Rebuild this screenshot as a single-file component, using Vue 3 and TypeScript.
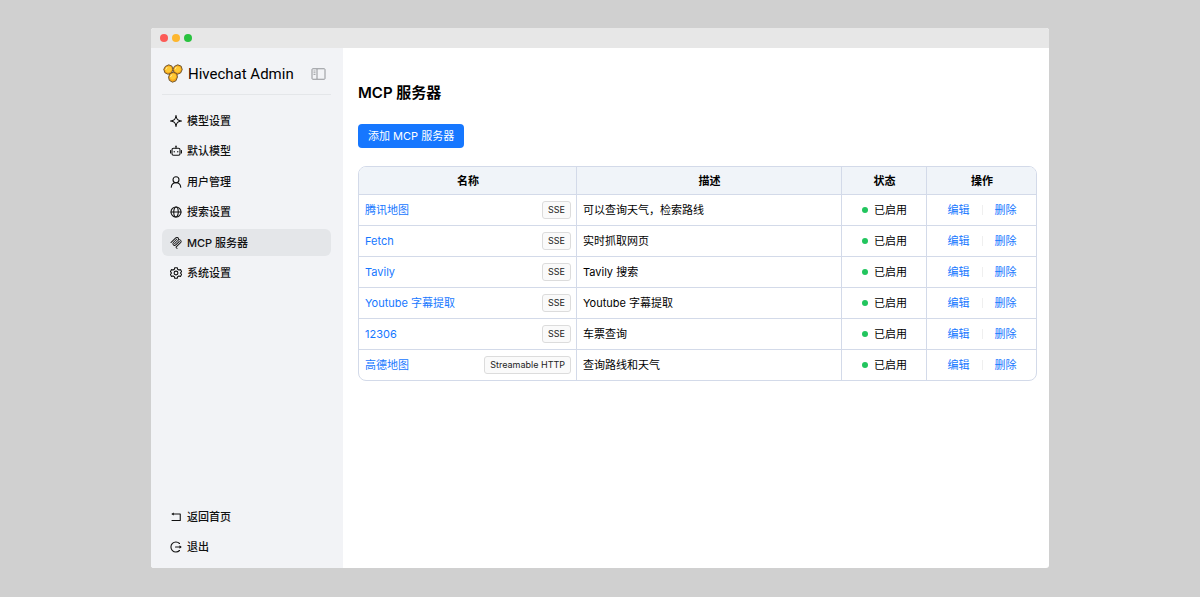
<script setup lang="ts">
interface NavItem {
  label: string
  icon: 'spark' | 'robot' | 'user' | 'globe' | 'mcp' | 'gear'
  active?: boolean
}

interface Server {
  name: string
  transport: string
  description: string
}

const navItems: NavItem[] = [
  { label: '模型设置', icon: 'spark' },
  { label: '默认模型', icon: 'robot' },
  { label: '用户管理', icon: 'user' },
  { label: '搜索设置', icon: 'globe' },
  { label: 'MCP 服务器', icon: 'mcp', active: true },
  { label: '系统设置', icon: 'gear' },
]

const servers: Server[] = [
  { name: '腾讯地图', transport: 'SSE', description: '可以查询天气，检索路线' },
  { name: 'Fetch', transport: 'SSE', description: '实时抓取网页' },
  { name: 'Tavily', transport: 'SSE', description: 'Tavily 搜索' },
  { name: 'Youtube 字幕提取', transport: 'SSE', description: 'Youtube 字幕提取' },
  { name: '12306', transport: 'SSE', description: '车票查询' },
  { name: '高德地图', transport: 'Streamable HTTP', description: '查询路线和天气' },
]
</script>

<template>
  <div class="desktop">
    <div class="window">
      <div class="titlebar">
        <span class="light red"></span>
        <span class="light yellow"></span>
        <span class="light green"></span>
      </div>
      <div class="body">
        <aside class="sidebar">
          <div class="brand">
            <svg class="logo" viewBox="0 0 38 36" aria-hidden="true">
              <g stroke="#6b512b" stroke-width="1.8" stroke-linejoin="round">
                <path fill="#f6a81c" d="M4.500 4.500L11 1.500l6 2.500 2 6.500-3 6.500-6.500 2.500-6-3L1.500 10z" />
                <path fill="#f6a81c" d="M21.500 4.500L28 1.500l6.500 2.500 2 6.500-3 6.500-6.500 2.500-6-3-2-6.500z" />
                <path fill="#f6a81c" d="M13 18.500l6.500-3 6.500 2.500 1.500 6.500-3 7.500-6.500 2.500-6-3.500-1.500-6z" />
              </g>
              <g fill="#ffc933">
                <path d="M6 6.500L11 4l4.500 2 1 4.500-2.500 4-4.500 1.500-4-2-1-4z" />
                <path d="M23 6.500L28 4l4.500 2 1.500 4.500-2.500 4-4.500 1.500-4-2-1-4z" />
                <path d="M14.500 20.500l5-2.500 4.500 2 1 4.500-2.500 4-4.500 1.500-4-2-.5-4z" />
              </g>
              <g fill="none" stroke="#fff0a8" stroke-width="1.800" stroke-linecap="round">
                <path d="M5.500 10l2-3.500M23 9.500l2-3.500M14.500 24l2-3.500" />
              </g>
            </svg>
            <span class="brand-name">Hivechat Admin</span>
            <button class="collapse" type="button" aria-label="收起侧栏">
              <svg viewBox="0 0 28 24" fill="none" stroke="#929498" stroke-width="2">
                <rect x="1" y="1.500" width="26" height="21" rx="1.500" />
                <path d="M11 2v20" />
                <path d="M4 6h4M4 9.500h4M4 13h4" stroke-width="1.600" />
              </svg>
            </button>
          </div>
          <nav class="nav">
            <a
              v-for="item in navItems"
              :key="item.label"
              href="#"
              class="nav-item"
              :class="{ active: item.active }"
            >
              <svg v-if="item.icon === 'spark'" class="icon" viewBox="0 0 24 24">
                <path class="line" d="M12 1c.7 5 1.500 7 3.200 8.300 1.500 1.200 3.300 2.200 7.800 2.700-4.500.5-6.300 1.500-7.800 2.700C13.500 16 12.700 18 12 23c-.7-5-1.500-7-3.200-8.300C7.300 13.500 5.500 12.500 1 12c4.500-.5 6.300-1.500 7.800-2.700C10.500 8 11.300 6 12 1z" />
              </svg>
              <svg v-else-if="item.icon === 'robot'" class="icon" viewBox="0 0 24 24">
                <rect class="line" x="4" y="6.500" width="16" height="14" rx="3" />
                <path class="line" d="M12 6.500V3M1 11v5M23 11v5" />
                <circle cx="12" cy="2.500" r="1.500" />
                <circle cx="8.500" cy="13.500" r="1.400" />
                <circle cx="15.500" cy="13.500" r="1.400" />
              </svg>
              <svg v-else-if="item.icon === 'user'" class="icon" viewBox="0 0 24 24">
                <circle class="line" cx="12" cy="7.500" r="6" />
                <path class="line" d="M2.500 22.500c.5-5.500 4-9 9.500-9s9 3.500 9.500 9" />
              </svg>
              <svg v-else-if="item.icon === 'globe'" class="icon" viewBox="0 0 24 24">
                <circle class="line" cx="12" cy="12" r="10" />
                <ellipse class="line" cx="12" cy="12" rx="4.500" ry="10" />
                <path class="line" d="M2 12h20" />
              </svg>
              <svg v-else-if="item.icon === 'mcp'" class="icon" viewBox="0 0 24 24">
                <path d="M15.688 2.343a2.588 2.588 0 00-3.610 0l-9.626 9.440a.863.863 0 01-1.203 0 .823.823 0 010-1.180l9.626-9.440a4.313 4.313 0 016.016 0 4.116 4.116 0 011.204 3.540 4.300 4.300 0 013.609 1.180l.05.05a4.115 4.115 0 010 5.900l-8.706 8.537a.274.274 0 000 .393l1.788 1.754a.823.823 0 010 1.180.863.863 0 01-1.203 0l-1.788-1.753a1.920 1.920 0 010-2.754l8.706-8.538a2.470 2.470 0 000-3.540l-.05-.049a2.588 2.588 0 00-3.607-.003l-7.172 7.034-.002.002-.098.097a.863.863 0 01-1.204 0 .823.823 0 010-1.180l7.273-7.133a2.470 2.470 0 00-.003-3.537z" />
                <path d="M14.485 4.703a.823.823 0 000-1.180.863.863 0 00-1.204 0l-7.119 6.982a4.115 4.115 0 000 5.900 4.314 4.314 0 006.016 0l7.120-6.982a.823.823 0 000-1.180.863.863 0 00-1.204 0l-7.119 6.982a2.588 2.588 0 01-3.610 0 2.470 2.470 0 010-3.540l7.120-6.982z" />
              </svg>
              <svg v-else class="icon" viewBox="0 0 24 24">
                <path class="line" d="M9.500 1.500h5l.8 3.200 2.400 1.400 3.200-.9 2.300 4-2.300 2.800 2.300 2.800-2.300 4-3.200-.9-2.400 1.400-.8 3.200h-5l-.8-3.200-2.400-1.400-3.200.9-2.300-4L3.100 12 .8 9.200l2.300-4 3.200.9 2.400-1.400z" />
                <circle class="line" cx="12" cy="12" r="3.800" />
              </svg>
              <span>{{ item.label }}</span>
            </a>
          </nav>
          <div class="nav-bottom">
            <a href="#" class="nav-item">
              <svg class="icon" viewBox="0 0 24 24">
                <path class="line" d="M6 6h14.500v13H4" />
                <path d="M2.500 6l5-3v6z" />
              </svg>
              <span>返回首页</span>
            </a>
            <a href="#" class="nav-item">
              <svg class="icon" viewBox="0 0 24 24">
                <path class="line" d="M19 5A10 10 0 1019 19M11 12h10" />
                <path d="M19 8.500l4.500 3.500-4.500 3.500z" />
              </svg>
              <span>退出</span>
            </a>
          </div>
        </aside>
        <main class="content">
          <h1>MCP 服务器</h1>
          <button class="add" type="button">添加 MCP 服务器</button>
          <table class="servers">
            <colgroup>
              <col class="col-name" />
              <col />
              <col class="col-status" />
              <col class="col-actions" />
            </colgroup>
            <thead>
              <tr>
                <th scope="col">名称</th>
                <th scope="col">描述</th>
                <th scope="col">状态</th>
                <th scope="col">操作</th>
              </tr>
            </thead>
            <tbody>
              <tr v-for="server in servers" :key="server.name">
                <td>
                  <div class="name-cell">
                    <a href="#" class="link">{{ server.name }}</a>
                    <span class="tag">{{ server.transport }}</span>
                  </div>
                </td>
                <td>{{ server.description }}</td>
                <td>
                  <div class="status"><span class="dot"></span>已启用</div>
                </td>
                <td>
                  <div class="actions">
                    <button class="link" type="button">编辑</button>
                    <span class="divider"></span>
                    <button class="link" type="button">删除</button>
                  </div>
                </td>
              </tr>
            </tbody>
          </table>
        </main>
      </div>
    </div>
  </div>
</template>

<style>
body {
  background: #d0d0d0;
}
</style>

<style scoped>
.desktop {
  box-sizing: border-box;
  display: flex;
  min-height: 100vh;
  padding: 28px 151px 29px;
  background: #d0d0d0;
  color: #000;
  font-family: Inter, "Noto Sans CJK SC", sans-serif;
  font-size: 11px;
  line-height: 16px;
}

.window {
  display: flex;
  flex: 1;
  flex-direction: column;
  min-width: 0;
  overflow: hidden;
  border-radius: 3px;
  background: #fff;
}

.titlebar {
  display: flex;
  align-items: center;
  gap: 4px;
  height: 20px;
  padding-left: 9px;
  background: #e7e7e7;
}

.light {
  width: 8px;
  height: 8px;
  border-radius: 50%;
}

.red { background: #fc5b57; }
.yellow { background: #fdb62e; }
.green { background: #29c23f; }

.body {
  display: flex;
  flex: 1;
}

.sidebar {
  box-sizing: border-box;
  display: flex;
  flex: 0 0 192px;
  flex-direction: column;
  padding: 4px 12px 8px 11px;
  background: #f2f3f6;
}

.brand {
  box-sizing: border-box;
  display: flex;
  align-items: center;
  height: 43px;
  padding: 1px 5px 0 1px;
  border-bottom: 1px solid #e4e6e9;
}

.logo {
  width: 20px;
  height: 19px;
}

.brand-name {
  flex: 1;
  margin-left: 5px;
  font-family: Roboto, sans-serif;
  font-size: 15px;
  line-height: 20px;
  white-space: nowrap;
}

button {
  padding: 0;
  border: 0;
  background: none;
  font: inherit;
  cursor: pointer;
}

.collapse svg {
  display: block;
  width: 15px;
  height: 12px;
}

.nav {
  display: flex;
  flex-direction: column;
  justify-content: space-between;
  height: 180px;
  margin-top: 12px;
}

.nav-item {
  display: flex;
  align-items: center;
  gap: 5px;
  height: 27px;
  padding-left: 8px;
  border-radius: 6px;
  color: #111;
  font-weight: 500;
  text-decoration: none;
}

.nav-item.active {
  background: #e4e6e9;
}

.icon {
  width: 12px;
  height: 12px;
  fill: #111;
}

.line {
  fill: none;
  stroke: #111;
  stroke-width: 2.2;
  stroke-linejoin: round;
  stroke-linecap: round;
}

.nav-bottom {
  display: flex;
  flex-direction: column;
  gap: 3px;
  margin-top: auto;
}

.content {
  flex: 1;
  min-width: 0;
  padding: 34px 12px 24px 15px;
}

h1 {
  margin: 0 0 20px;
  font-size: 15px;
  font-weight: 600;
  line-height: 22px;
}

.add {
  display: block;
  height: 24px;
  margin-bottom: 18px;
  padding: 0 10px;
  border-radius: 4px;
  background: #1677ff;
  color: #fff;
}

.servers {
  width: 100%;
  border: 1px solid #d3dae9;
  border-radius: 8px;
  border-spacing: 0;
  overflow: hidden;
  table-layout: fixed;
}

.col-name { width: 218px; }
.col-status { width: 85px; }
.col-actions { width: 109px; }

th,
td {
  box-sizing: border-box;
  padding: 0 5px 0 6px;
  border-right: 1px solid #d3dae9;
}

th {
  height: 27px;
  background: #f0f4f9;
  font-weight: 600;
}

td {
  height: 31px;
  border-top: 1px solid #d3dae9;
}

th:last-child,
td:last-child {
  border-right: 0;
}

.name-cell {
  display: flex;
  align-items: center;
  justify-content: space-between;
}

.link {
  color: #1677ff;
  text-decoration: none;
}

.tag {
  padding: 0 5px;
  border: 1px solid #dcdcdc;
  border-radius: 3px;
  background: #fafafa;
  color: #222;
  font-size: 9px;
}

.status,
.actions {
  display: flex;
  align-items: center;
  justify-content: center;
}

.status {
  gap: 6px;
}

.dot {
  width: 6px;
  height: 6px;
  border-radius: 50%;
  background: #22c55e;
}

.actions {
  gap: 12px;
}

.divider {
  width: 1px;
  height: 10px;
  background: #efefef;
}
</style>
